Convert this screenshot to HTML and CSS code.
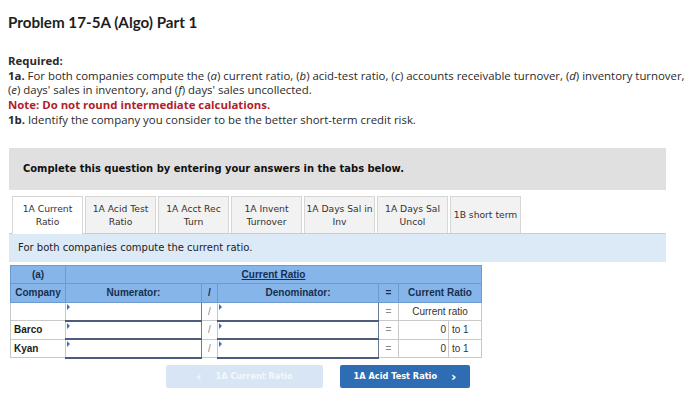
FILE: index.html
```html
<!DOCTYPE html>
<html>
<head>
<meta charset="utf-8">
<link rel="stylesheet" href="styles.css">
</head>
<body>
<div class="page">
  <h1 class="title">Problem 17-5A (Algo) Part 1</h1>
  <div class="req">
    <p class="b">Required:</p>
    <p><b>1a.</b> For both companies compute the (<i>a</i>) current ratio, (<i>b</i>) acid-test ratio, (<i>c</i>) accounts receivable turnover, (<i>d</i>) inventory turnover,<br>(<i>e</i>) days' sales in inventory, and (<i>f</i>) days' sales uncollected.</p>
    <p class="note">Note: Do not round intermediate calculations.</p>
    <p><b>1b.</b> Identify the company you consider to be the better short-term credit risk.</p>
  </div>
  <div class="instr">Complete this question by entering your answers in the tabs below.</div>
  <div class="tabs">
    <div class="tab active">1A Current<br>Ratio</div>
    <div class="tab">1A Acid Test<br>Ratio</div>
    <div class="tab">1A Acct Rec<br>Turn</div>
    <div class="tab">1A Invent<br>Turnover</div>
    <div class="tab">1A Days Sal in<br>Inv</div>
    <div class="tab">1A Days Sal<br>Uncol</div>
    <div class="tab">1B short term</div>
  </div>
  <div class="prompt">For both companies compute the current ratio.</div>
  <table class="grid">
    <colgroup>
      <col class="c-co"><col class="c-num"><col class="c-sl"><col class="c-den"><col class="c-eq"><col class="c-val"><col class="c-unit">
    </colgroup>
    <tr class="h">
      <th>(a)</th>
      <th colspan="6"><u>Current Ratio</u></th>
    </tr>
    <tr class="h">
      <th>Company</th>
      <th>Numerator:</th>
      <th>/</th>
      <th>Denominator:</th>
      <th>=</th>
      <th colspan="2">Current Ratio</th>
    </tr>
    <tr>
      <td class="co"></td>
      <td class="in"><span class="mark"></span></td>
      <td class="op">/</td>
      <td class="in"><span class="mark"></span></td>
      <td class="op">=</td>
      <td colspan="2" class="lab">Current ratio</td>
    </tr>
    <tr>
      <td class="co">Barco</td>
      <td class="in"><span class="mark"></span></td>
      <td class="op">/</td>
      <td class="in"><span class="mark"></span></td>
      <td class="op">=</td>
      <td class="val">0</td>
      <td class="unit">to 1</td>
    </tr>
    <tr>
      <td class="co">Kyan</td>
      <td class="in"><span class="mark"></span></td>
      <td class="op">/</td>
      <td class="in"><span class="mark"></span></td>
      <td class="op">=</td>
      <td class="val">0</td>
      <td class="unit">to 1</td>
    </tr>
  </table>
  <div class="nav">
    <div class="btn prev"><span class="chev">&lsaquo;</span>1A Current Ratio</div>
    <div class="btn next">1A Acid Test Ratio<span class="chev r">&rsaquo;</span></div>
  </div>
</div>
</body>
</html>
```

FILE: styles.css
```css
html, body {
  margin: 0;
  padding: 0;
  background: #fff;
}
.page {
  padding: 12px 0 0 8px;
  width: 692px;
  font-family: "Open Sans", "Lato", sans-serif;
  color: #222;
}
.title {
  margin: 0;
  font-family: "Lato", "Open Sans", sans-serif;
  font-size: 15.2px;
  line-height: 20px;
  font-weight: 700;
  color: #1e1e1e;
}
.req {
  margin-top: 22px;
  font-size: 11.4px;
  line-height: 14.7px;
  color: #2a2a2a;
  white-space: nowrap;
}
.req p {
  margin: 0;
}
.req .b {
  font-weight: 700;
}
.req b {
  font-weight: 700;
}
.req .note {
  color: #b3202a;
  font-weight: 700;
}
.instr {
  margin: 20px 0 0 1px;
  width: 643px;
  height: 42px;
  padding-left: 14px;
  background: #e0e0e0;
  font-family: "DejaVu Sans", Verdana, sans-serif;
  font-weight: 700;
  font-size: 9.95px;
  line-height: 42px;
  color: #111;
}
.tabs {
  display: flex;
  gap: 2px;
  margin: 6px 0 0 4px;
  height: 37px;
}
.tab {
  width: 69px;
  height: 36px;
  border: 1px solid #d6d6d6;
  border-bottom: none;
  background: #f2f2f2;
  display: flex;
  align-items: center;
  justify-content: center;
  text-align: center;
  font-family: "DejaVu Sans", Verdana, sans-serif;
  font-size: 9.2px;
  line-height: 13px;
  color: #333;
  white-space: nowrap;
}
.tab.active {
  background: #fff;
  height: 37px;
  position: relative;
  z-index: 1;
}
.prompt {
  margin-left: 1px;
  width: 648px;
  height: 28px;
  padding-left: 9px;
  background: #dceaf8;
  border-top: 1px solid #c8ced6;
  font-family: "DejaVu Sans", Verdana, sans-serif;
  font-size: 10px;
  line-height: 28px;
  color: #222;
}
.grid {
  margin: 3px 0 0 2px;
  border-collapse: collapse;
  font-family: "Liberation Sans", Arial, sans-serif;
  font-size: 10px;
  table-layout: fixed;
  width: 471px;
}
.c-co { width: 55px; }
.c-num { width: 136px; }
.c-sl { width: 16px; }
.c-den { width: 161px; }
.c-eq { width: 20px; }
.c-val { width: 50px; }
.c-unit { width: 33px; }
.grid tr { height: 18.5px; }
.grid tr.h { height: 18.5px; }
.grid th {
  background: #86b6e9;
  border: 1px solid #6d9ad0;
  color: #172e50;
  font-weight: 700;
  padding: 0;
  text-align: center;
  height: 17px;
}
.grid td {
  border: 1px solid #c9c9c9;
  padding: 0;
  height: 16.5px;
}
.grid td.co {
  padding-left: 3px;
  font-weight: 700;
  color: #1b1b1b;
}
.grid td.in {
  position: relative;
  border: 1px solid #6c7a96;
  border-bottom: 2px solid #4d5c7c;
  background: #fff;
}
.mark {
  position: absolute;
  left: 1px;
  top: 1px;
  width: 0;
  height: 0;
  border-top: 3px solid transparent;
  border-bottom: 3px solid transparent;
  border-left: 3px solid #3b73c4;
}
.grid td.op {
  text-align: center;
  color: #888;
}
.grid td.lab {
  text-align: center;
  color: #333;
}
.grid td.val {
  text-align: right;
  padding-right: 2px;
  color: #333;
}
.grid td.unit {
  padding-left: 3px;
  color: #333;
}
.nav {
  display: flex;
  gap: 17px;
  margin: 6px 0 0 158px;
}
.btn {
  height: 23px;
  border-radius: 2px;
  display: flex;
  align-items: center;
  justify-content: center;
  font-family: "DejaVu Sans", Verdana, sans-serif;
  font-weight: 700;
  font-size: 8.2px;
  color: #fff;
}
.btn.prev {
  width: 157px;
  background: #d7e5f4;
  color: #f4f8fc;
}
.btn.next {
  width: 130px;
  background: #2e6db4;
}
.chev {
  font-size: 13px;
  margin-right: 14px;
  font-weight: 700;
}
.chev.r {
  margin: 0 0 0 14px;
}
```
